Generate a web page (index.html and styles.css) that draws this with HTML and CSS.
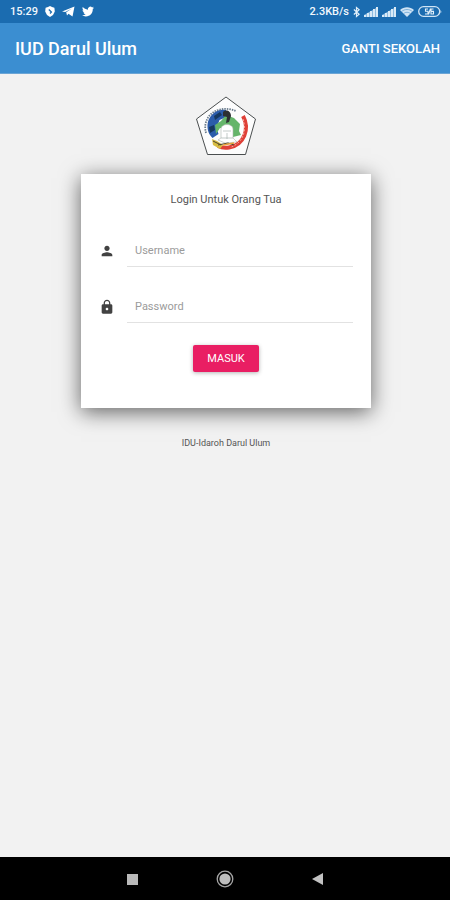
FILE: index.html
```html
<!DOCTYPE html>
<html lang="id">
<head>
    <meta charset="UTF-8">
    <meta name="viewport" content="width=device-width, initial-scale=1.0">
    <title>IUD Darul Ulum</title>
    <link rel="stylesheet" href="styles.css">
</head>
<body>
    <div class="status-bar">
        <div class="status-left">
            <span class="clock">15:29</span>
            <svg width="10" height="11" viewBox="0 0 10 11"><path fill="#fff" d="M5 0l2 1 2.400.8L9.800 5.500 8 9 5 11 2 9 .2 5.500.6 1.800 3 1z"/><path fill="none" stroke="#1b6cb0" stroke-width="1.300" d="M3.800 3.500l2.600 2.500L5 7.500"/></svg>
            <svg width="13" height="11" viewBox="0 0 13 11"><path fill="#fff" d="M0 5.400L12.500.5 10.500 10.500 6.500 7.700 5 9.500 4.200 6.300 10 2.600 3.200 6.100z"/></svg>
            <svg width="12" height="11" viewBox="0 0 24 22"><path fill="#fff" d="M23.950 3.570a10 10 0 01-2.820.77 4.960 4.960 0 002.160-2.720c-.95.550-2 .950-3.130 1.180a4.920 4.920 0 00-8.380 4.480C7.690 7.090 4.070 5.130 1.640 2.160a4.820 4.820 0 00-.67 2.480c0 1.710.87 3.210 2.190 4.100a4.900 4.900 0 01-2.230-.62v.06a4.920 4.920 0 003.950 4.830 5 5 0 01-2.210.08 4.940 4.940 0 004.600 3.420A9.870 9.870 0 010 18.540a14 14 0 007.550 2.210c9.050 0 14-7.500 14-13.980 0-.21 0-.42-.02-.63a9.940 9.940 0 002.420-2.570z"/></svg>
        </div>
        <div class="status-right">
            <span class="speed">2.3KB/s</span>
            <svg width="7" height="12" viewBox="0 0 8 12"><path fill="none" stroke="#e3f0fa" stroke-width="1.400" d="M1 3.200l6 5.400L4 11V1l3 2.400L1 8.800"/></svg>
            <svg width="14" height="10" viewBox="0 0 14 10"><path fill="#8dbbe0" d="M0 8L14 0v10H0z"/><path fill="#d9eaf7" d="M0 8h2v2H0zM3 6h2v4H3zM6 4h2v6H6zM9 2h2v8H9zM12 0h2v10h-2z"/></svg>
            <svg width="14" height="10" viewBox="0 0 14 10"><path fill="#8dbbe0" d="M0 8L14 0v10H0z"/><path fill="#d9eaf7" d="M0 8h2v2H0zM3 6h2v4H3zM6 4h2v6H6zM9 2h2v8H9zM12 0h2v10h-2z"/></svg>
            <svg class="wifi" width="14" height="10" viewBox="0 0 14 10"><path fill="#cfe4f5" d="M0 3C4-.8 10-.8 14 3L7 10z"/><path fill="none" stroke="#5c9bcf" stroke-width=".7" d="M1.500 4.600c3.300-2.800 7.700-2.800 11 0M3.500 6.600c2-1.800 5-1.800 7 0"/></svg>
            <svg class="battery" width="24" height="11" viewBox="0 0 24 11"><rect x=".7" y=".7" width="21" height="9.600" rx="4.800" fill="none" stroke="#cfe4f5" stroke-width="1.300"/><path fill="#cfe4f5" d="M22.500 3.500q1.500 2 0 4z"/><path fill="none" stroke="#e3f0fa" stroke-width="1.100" d="M10 3H7.500v2.200H10V8H7M15.500 3H13v5h2.500V5.400H13M12.500 2.500l-2 6"/></svg>
        </div>
    </div>

    <header class="app-bar">
        <h1>IUD Darul Ulum</h1>
        <a href="#" class="change-school">GANTI SEKOLAH</a>
    </header>

    <main class="content">
        <svg class="logo" width="62" height="60" viewBox="0 0 62 60">
            <path fill="#fdfdfd" stroke="#4b4f50" stroke-width="1" d="M31 1L60.500 23 50.500 58.500H12.500L1.500 23z"/>
            <g transform="translate(0 1)">
                <path fill="#2b5cab" d="M31 13c-10-2-18 6-18.500 15-.3 6 2 10 5 13l6-4-2-6 3-8 7-3z"/>
                <path fill="#16385f" d="M19 19l6-4 2 3-7 5zM14 30l5-2 1 5-5 3z"/>
                <path fill="#65b56a" d="M31 18l8 3 6 6-1 7 2 4-8 2-4-8-9-1-4 6-1-9 6-4z"/>
                <path fill="#2c3032" d="M28 15c3-3 8-1 8 4l-2 6-3 1 1-6-4-1z"/>
                <path fill="#fff" stroke="#adb5af" stroke-width=".6" d="M26 41v-9c0-6 12-6 12 0v9l4 4-12 1-7-3z"/>
                <path fill="none" stroke="#9ca7a4" stroke-width=".6" d="M28 34h8M26 41h12M32 36v6"/>
                <path fill="none" stroke="#6b7c8c" stroke-width="1.800" stroke-dasharray="1.500 1" d="M11 36c-3-11 3-20 12-23 7-2 13-1 18 1"/>
                <path fill="none" stroke="#df4037" stroke-width="4" d="M48 19c7 13 1 29-14 31.500-4 .7-8 0-11-1.500"/>
                <path fill="none" stroke="#f5aaa1" stroke-width="1" stroke-dasharray="2 1.500" d="M48 22c4 12 0 24-13 28.500"/>
                <path fill="#d8bd43" d="M17 42l5 2 6 4-3 4-7-4z"/>
                <path fill="none" stroke="#4a4430" stroke-width="1" d="M18 44l8 4M23 48l10-2 6 2"/>
                <path fill="none" stroke="#e7a13a" stroke-width="1.500" d="M28 48l11-2"/>
            </g>
        </svg>

        <form class="login-card">
            <h2>Login Untuk Orang Tua</h2>
            <div class="field">
                <label for="username" aria-label="Username">
                    <svg width="16" height="16" viewBox="0 0 24 24"><path fill="#424242" d="M12 12c2.210 0 4-1.790 4-4s-1.790-4-4-4-4 1.790-4 4 1.790 4 4 4zm0 2c-2.670 0-8 1.340-8 4v2h16v-2c0-2.660-5.330-4-8-4z"/></svg>
                </label>
                <input type="text" id="username" placeholder="Username">
            </div>
            <div class="field">
                <label for="password" aria-label="Password">
                    <svg width="16" height="16" viewBox="0 0 24 24"><path fill="#424242" d="M18 8h-1V6c0-2.760-2.240-5-5-5S7 3.240 7 6v2H6c-1.100 0-2 .9-2 2v10c0 1.100.9 2 2 2h12c1.100 0 2-.9 2-2V10c0-1.100-.9-2-2-2zm-6 9c-1.100 0-2-.9-2-2s.9-2 2-2 2 .9 2 2-.9 2-2 2zm3.100-9H8.900V6c0-1.710 1.390-3.100 3.100-3.100s3.100 1.390 3.100 3.100v2z"/></svg>
                </label>
                <input type="password" id="password" placeholder="Password">
            </div>
            <button type="submit" class="login-btn">MASUK</button>
        </form>

        <p class="footer-text">IDU-Idaroh Darul Ulum</p>
    </main>

    <nav class="nav-bar">
        <button type="button" aria-label="Recent"><svg width="18" height="18" viewBox="0 0 18 18"><path fill="#b9b9b9" d="M4 4h11v11H4z"/></svg></button>
        <button type="button" aria-label="Home"><svg width="18" height="18" viewBox="0 0 18 18"><circle cx="9" cy="9" r="7.800" fill="none" stroke="#a5a5a5" stroke-width="1.300"/><circle cx="9" cy="9" r="5.600" fill="#bdbdbd"/></svg></button>
        <button type="button" aria-label="Back"><svg width="18" height="18" viewBox="0 0 18 18"><path fill="#c2c2c2" d="M3 9l11-6v12z"/></svg></button>
    </nav>
</body>
</html>
```

FILE: styles.css
```css
* {
    box-sizing: border-box;
}
body {
    margin: 0;
    min-height: 100vh;
    display: flex;
    flex-direction: column;
    font-family: Roboto, sans-serif;
    background-color: #f2f2f2;
}
svg {
    display: block;
}
.status-bar {
    display: flex;
    justify-content: space-between;
    align-items: center;
    height: 23px;
    padding: 0 8px 0 10px;
    background-color: #1b6cb0;
    color: #f1f8fd;
    font-size: 11px;
    font-weight: 500;
}
.status-left {
    display: flex;
    align-items: center;
    gap: 7px;
}
.status-right {
    display: flex;
    align-items: center;
    gap: 4px;
}
.app-bar {
    display: flex;
    justify-content: space-between;
    align-items: center;
    height: 51px;
    padding: 0 10px 0 15px;
    background-color: #3b8ed1;
    border-bottom: 1px solid #6ba5d5;
    color: #fff;
}
.app-bar h1 {
    margin: 0;
    font-size: 18px;
    font-weight: 500;
}
.change-school {
    color: #fff;
    font-size: 13px;
    font-weight: 500;
    text-decoration: none;
}
.content {
    flex: 1;
    display: flex;
    flex-direction: column;
    align-items: center;
    padding: 22px 79px 22px 81px;
}
.login-card {
    display: flex;
    flex-direction: column;
    align-items: center;
    width: 100%;
    margin-top: 18px;
    padding: 18px 18px 36px;
    background-color: #fff;
    box-shadow: 0 4px 20px rgba(0, 0, 0, 0.6);
}
.login-card h2 {
    margin: 0 0 19px;
    color: #555;
    font-size: 11px;
    font-weight: 400;
    line-height: 16px;
}
.field {
    display: flex;
    align-items: center;
    gap: 12px;
    width: 100%;
    margin-bottom: 16px;
}
.field label {
    padding-top: 8px;
}
.field input {
    flex: 1;
    min-width: 0;
    height: 40px;
    padding: 8px 8px 0;
    border: none;
    border-bottom: 1px solid #e2e2e2;
    background: none;
    color: #424242;
    font-family: inherit;
    font-size: 11px;
    outline: none;
}
.field input::placeholder {
    color: #9b9b9b;
    opacity: 1;
}
.login-btn {
    height: 27px;
    margin-top: 6px;
    padding: 0 14px;
    border: none;
    border-radius: 2px;
    background-color: #e91e63;
    box-shadow: 0 1px 4px rgba(0, 0, 0, 0.3);
    color: #fff;
    font-family: inherit;
    font-size: 11px;
    cursor: pointer;
}
.footer-text {
    margin: 28px 0 0;
    color: #555;
    font-size: 9px;
    line-height: 14px;
}
.nav-bar {
    display: flex;
    justify-content: center;
    align-items: center;
    gap: 75px;
    height: 43px;
    background-color: #000;
}
.nav-bar button {
    padding: 0;
    border: none;
    background: none;
}
```
